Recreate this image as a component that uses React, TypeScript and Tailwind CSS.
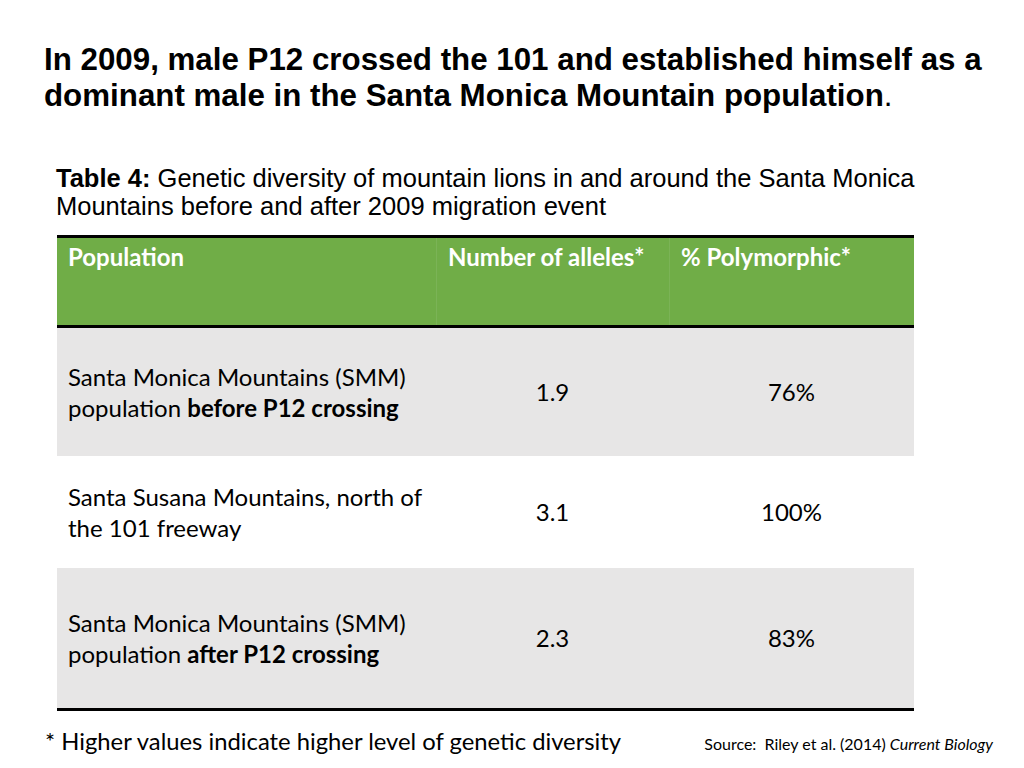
import React from "react";

const body = "font-['Lato','Noto_Sans',sans-serif]";

export default function App() {
  return (
    <div className="w-[1024px] h-[768px] bg-white overflow-hidden flex flex-col text-black">
      <h1 className="pl-[44px] pt-[42px] text-[31.3px] leading-[35.5px] font-bold font-['Liberation_Sans',Arial,sans-serif]">
        In 2009, male P12 crossed the 101 and established himself as a dominant male in the Santa Monica Mountain population<span className="font-normal">.</span>
      </h1>
      <p className="ml-[56px] mt-[51px] w-[880px] text-[25.5px] leading-[28.4px] font-['Liberation_Sans',Arial,sans-serif]">
        <span className="font-bold">Table 4:</span> Genetic diversity of mountain lions in and around the Santa Monica Mountains before and after 2009 migration event
      </p>
      <div className={`ml-[57px] mt-[14px] w-[857px] border-t-[3px] border-b-[3px] border-black ${body}`}>
        <div className="grid grid-cols-[379px_233px_245px] h-[90px] bg-[#70ad47] text-white font-bold text-[24px] leading-[31px] border-b-[3px] border-black">
          <div className="pl-[11px] pt-[3px]">Population</div>
          <div className="pl-[11px] pt-[3px] border-l border-[#7bb356]">Number of alleles*</div>
          <div className="pl-[11px] pt-[3px] border-l border-[#7bb356]">% Polymorphic*</div>
        </div>
        <Row bg="bg-[#e7e6e6]" h="h-[128px]" v1="1.9" v2="76%">
          Santa Monica Mountains (SMM) population <span className="font-bold">before P12 crossing</span>
        </Row>
        <Row bg="bg-white" h="h-[112px]" v1="3.1" v2="100%">
          Santa Susana Mountains, north of the 101 freeway
        </Row>
        <Row bg="bg-[#e7e6e6]" h="h-[140px]" v1="2.3" v2="83%">
          Santa Monica Mountains (SMM) population <span className="font-bold">after P12 crossing</span>
        </Row>
      </div>
      <div className={`flex items-baseline justify-between pl-[45px] pr-[31px] mt-[14px] ${body}`}>
        <span className="text-[23.8px] leading-[32px]">* Higher values indicate higher level of genetic diversity</span>
        <span className="text-[16px]">
          Source:&nbsp; Riley et al. (2014) <span className="italic">Current Biology</span>
        </span>
      </div>
    </div>
  );
}

function Row({ bg, h, v1, v2, children }: { bg: string; h: string; v1: string; v2: string; children: React.ReactNode }) {
  return (
    <div className={`grid grid-cols-[379px_233px_245px] ${h} ${bg} text-[24px] leading-[31px]`}>
      <div className="flex items-center pl-[11px] pr-[6px]">
        <div>{children}</div>
      </div>
      <div className="flex items-center justify-center">{v1}</div>
      <div className="flex items-center justify-center">{v2}</div>
    </div>
  );
}
